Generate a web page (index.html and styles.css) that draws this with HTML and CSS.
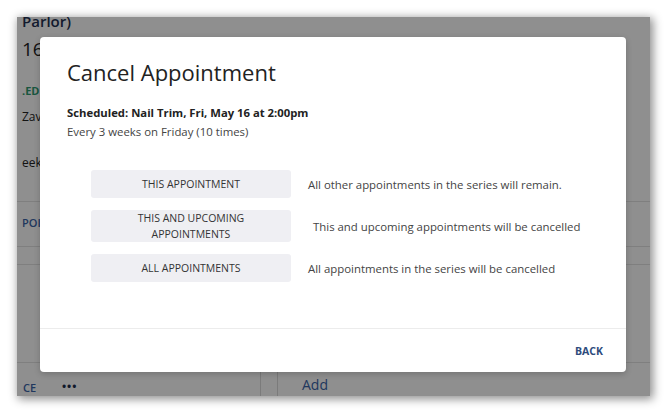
FILE: index.html
```html
<!DOCTYPE html>
<html lang="en">
<head>
<meta charset="utf-8">
<title>Cancel Appointment</title>
<link rel="stylesheet" href="styles.css">
</head>
<body>
<div class="desk">
  <div class="window">
    <div class="page">
      <div class="salon">Parlor)</div>
      <div class="date">16</div>
      <div class="status">.ED</div>
      <div class="client">Zav</div>
      <div class="repeat">eek</div>
      <div class="rule r1"></div>
      <div class="tab">POI</div>
      <div class="rule r2"></div>
      <div class="rule r3"></div>
      <div class="rule r4"></div>
      <div class="foot">
        <div class="foot-left"><span class="svc">CE</span><span class="dots">•••</span></div>
        <div class="foot-split"></div>
        <div class="foot-right">Add</div>
      </div>
    </div>
    <div class="scrim"></div>
    <div class="modal">
      <div class="modal-body">
        <h1 class="title">Cancel Appointment</h1>
        <div class="sched">Scheduled: Nail Trim, Fri, May 16 at 2:00pm</div>
        <div class="every">Every 3 weeks on Friday (10 times)</div>
        <div class="options">
          <div class="opt">
            <button class="btn">THIS APPOINTMENT</button>
            <span class="desc">All other appointments in the series will remain.</span>
          </div>
          <div class="opt">
            <button class="btn btn-tall">THIS AND UPCOMING<br>APPOINTMENTS</button>
            <span class="desc desc-shift">This and upcoming appointments will be cancelled</span>
          </div>
          <div class="opt">
            <button class="btn">ALL APPOINTMENTS</button>
            <span class="desc">All appointments in the series will be cancelled</span>
          </div>
        </div>
      </div>
      <div class="modal-foot">
        <button class="back">BACK</button>
      </div>
    </div>
  </div>
</div>
</body>
</html>
```

FILE: styles.css
```css
* { box-sizing: border-box; }
html, body { margin: 0; padding: 0; background: #ffffff; }
body { font-family: "Open Sans", "Liberation Sans", sans-serif; width: 667px; height: 412px; overflow: hidden; }

.desk { padding: 17px 0 0 17px; }

.window {
  position: relative;
  width: 633px;
  height: 379px;
  background: #ffffff;
  overflow: hidden;
  box-shadow: 2px 2px 9px 1px rgba(0, 0, 0, 0.45);
}

.page { padding-left: 5px; height: 100%; display: flex; flex-direction: column; }

.salon { font-size: 15px; line-height: 20px; font-weight: 600; color: #233152; margin-top: -6px; }
.date { font-size: 19px; line-height: 26px; font-weight: 400; color: #222; margin-top: 5px; }
.status { font-size: 11px; line-height: 16px; font-weight: 700; color: #2b9a70; margin-top: 21px; }
.client { font-size: 12px; line-height: 18px; color: #222; margin-top: 9px; }
.repeat { font-size: 12px; line-height: 18px; color: #222; margin-top: 28px; }
.tab { font-size: 11px; line-height: 16px; font-weight: 600; color: #3a64a8; margin-top: 13px; }

.rule { height: 1px; background: #e2e2e2; margin-left: -5px; flex: none; }
.r1 { margin-top: 29px; }
.r2 { margin-top: 15px; }
.r3 { margin-top: 17px; }
.r4 { margin-top: 97px; }

.foot { display: flex; height: 34px; margin-left: -5px; }
.foot-left { width: 244px; border-right: 1px solid #dcdcdc; padding: 14px 0 0 6px; font-size: 12px; line-height: 18px; }
.svc { font-weight: 600; color: #3a64a8; font-size: 11px; }
.dots { color: #1e2d4d; margin-left: 25px; font-size: 15px; letter-spacing: -0.5px; }
.foot-split { width: 17px; border-right: 1px solid #dcdcdc; }
.foot-right { padding: 13px 0 0 24px; font-size: 14px; line-height: 18px; color: #3a64a8; }

.scrim { position: absolute; inset: 0; background: rgba(0, 0, 0, 0.44); }

.modal {
  position: absolute;
  left: 23px;
  top: 20px;
  width: 586px;
  height: 335px;
  background: #ffffff;
  border-radius: 4px;
  box-shadow: 0 2px 6px rgba(0, 0, 0, 0.2);
  display: flex;
  flex-direction: column;
}

.modal-body { flex: 1; padding: 21px 27px 0 27px; }

.title { margin: 0; font-size: 22px; line-height: 28px; font-weight: 400; color: #222; }
.sched { margin-top: 18px; font-size: 11.3px; line-height: 18px; font-weight: 700; color: #222; }
.every { margin-top: 1px; font-size: 11.4px; line-height: 18px; color: #444; }

.options { margin: 29px 0 0 24px; display: flex; flex-direction: column; gap: 12px; }
.opt { display: flex; align-items: center; gap: 17px; }

.btn {
  width: 200px;
  height: 28px;
  border: none;
  border-radius: 3px;
  background: #efeff3;
  font-family: "Open Sans", "Liberation Sans", sans-serif;
  font-size: 10.5px;
  line-height: 16px;
  color: #333;
  padding: 0;
  text-align: center;
}
.btn-tall { height: 32px; }

.desc { font-size: 11.4px; color: #444; }
.desc-shift { padding-left: 5px; }

.modal-foot {
  height: 44px;
  border-top: 1px solid #ececec;
  display: flex;
  align-items: center;
  justify-content: flex-end;
  padding-right: 23px;
}

.back {
  border: none;
  background: none;
  padding: 0;
  font-family: "Open Sans", "Liberation Sans", sans-serif;
  font-size: 10.5px;
  font-weight: 700;
  color: #2d4b7c;
}
```
